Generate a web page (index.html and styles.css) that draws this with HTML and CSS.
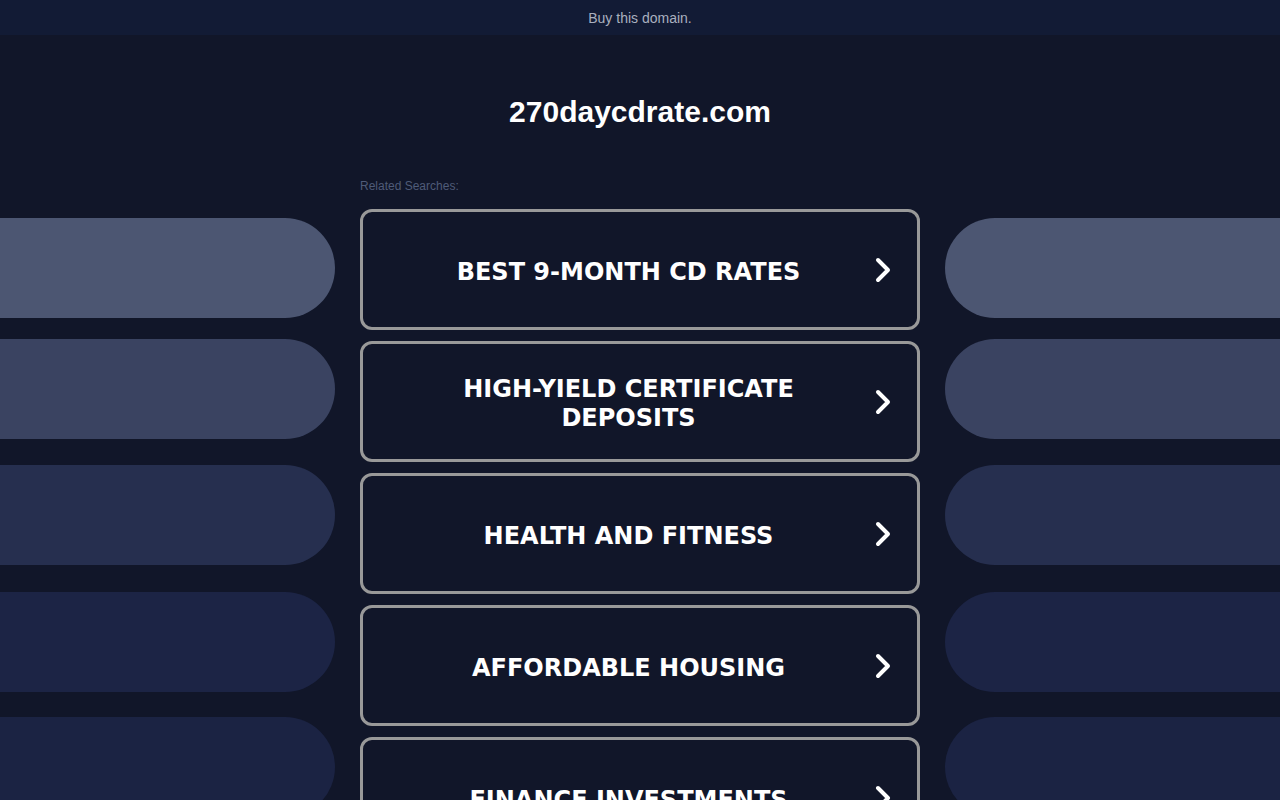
FILE: index.html
```html
<!DOCTYPE html>
<html>
<head>
<meta charset="utf-8">
<link rel="stylesheet" href="styles.css">
</head>
<body>
<div class="topbar">Buy this domain.</div>
<div class="layout">
  <div class="side side-left">
    <div class="pill p1"></div>
    <div class="pill p2"></div>
    <div class="pill p3"></div>
    <div class="pill p4"></div>
    <div class="pill p5"></div>
  </div>
  <div class="center">
    <h1 class="title">270daycdrate.com</h1>
    <div class="related">Related Searches:</div>
    <div class="links">
      <a class="link"><span class="label">BEST 9-MONTH CD RATES</span><svg class="chev" viewBox="0 0 18 28" width="18" height="28"><polyline points="4,4 14,14 4,24" /></svg></a>
      <a class="link"><span class="label">HIGH-YIELD CERTIFICATE DEPOSITS</span><svg class="chev" viewBox="0 0 18 28" width="18" height="28"><polyline points="4,4 14,14 4,24" /></svg></a>
      <a class="link"><span class="label">HEALTH AND FITNESS</span><svg class="chev" viewBox="0 0 18 28" width="18" height="28"><polyline points="4,4 14,14 4,24" /></svg></a>
      <a class="link"><span class="label">AFFORDABLE HOUSING</span><svg class="chev" viewBox="0 0 18 28" width="18" height="28"><polyline points="4,4 14,14 4,24" /></svg></a>
      <a class="link"><span class="label">FINANCE INVESTMENTS</span><svg class="chev" viewBox="0 0 18 28" width="18" height="28"><polyline points="4,4 14,14 4,24" /></svg></a>
    </div>
  </div>
  <div class="side side-right">
    <div class="pill p1"></div>
    <div class="pill p2"></div>
    <div class="pill p3"></div>
    <div class="pill p4"></div>
    <div class="pill p5"></div>
  </div>
</div>
</body>
</html>
```

FILE: styles.css
```css
html, body {
  margin: 0;
  padding: 0;
  background: #111629;
  height: 800px;
  overflow: hidden;
  font-family: "Liberation Sans", Arial, sans-serif;
}
.topbar {
  height: 35px;
  background: #121b35;
  color: #a9b0bf;
  font-size: 14px;
  line-height: 36px;
  text-align: center;
}
.layout {
  display: grid;
  grid-template-columns: 335px 560px 335px;
  column-gap: 25px;
}
.side {
  display: flex;
  flex-direction: column;
  padding-top: 183px;
}
.pill {
  height: 100px;
  flex: none;
}
.side-left .pill { border-radius: 0 50px 50px 0; }
.side-right .pill { border-radius: 50px 0 0 50px; }
.p1 { background: #4c5672; }
.p2 { background: #3a4361; margin-top: 21px; }
.p3 { background: #262f4f; margin-top: 26px; }
.p4 { background: #1c2445; margin-top: 27px; }
.p5 { background: #1b2343; margin-top: 25px; }
.center {
  display: flex;
  flex-direction: column;
}
.title {
  margin: 0;
  padding-top: 59px;
  height: 36px;
  text-align: center;
  color: #ffffff;
  font-size: 30px;
  font-weight: bold;
  line-height: 36px;
}
.related {
  margin-top: 49px;
  color: #4f5b78;
  font-size: 12px;
  line-height: 14px;
}
.links {
  margin-top: 16px;
  display: flex;
  flex-direction: column;
  gap: 11px;
}
.link {
  box-sizing: border-box;
  height: 121px;
  border: 3px solid #999999;
  border-radius: 12px;
  display: flex;
  align-items: center;
  padding: 0 25px 0 20px;
  color: #ffffff;
  text-decoration: none;
}
.label {
  flex: 1;
  text-align: center;
  font-family: "DejaVu Sans", Verdana, sans-serif;
  font-weight: bold;
  font-size: 24px;
  line-height: 29px;
  padding: 5px 32px 0 32px;
}
.chev {
  flex: none;
  fill: none;
  stroke: #ffffff;
  stroke-width: 4;
  stroke-linecap: round;
  stroke-linejoin: round;
}
```
